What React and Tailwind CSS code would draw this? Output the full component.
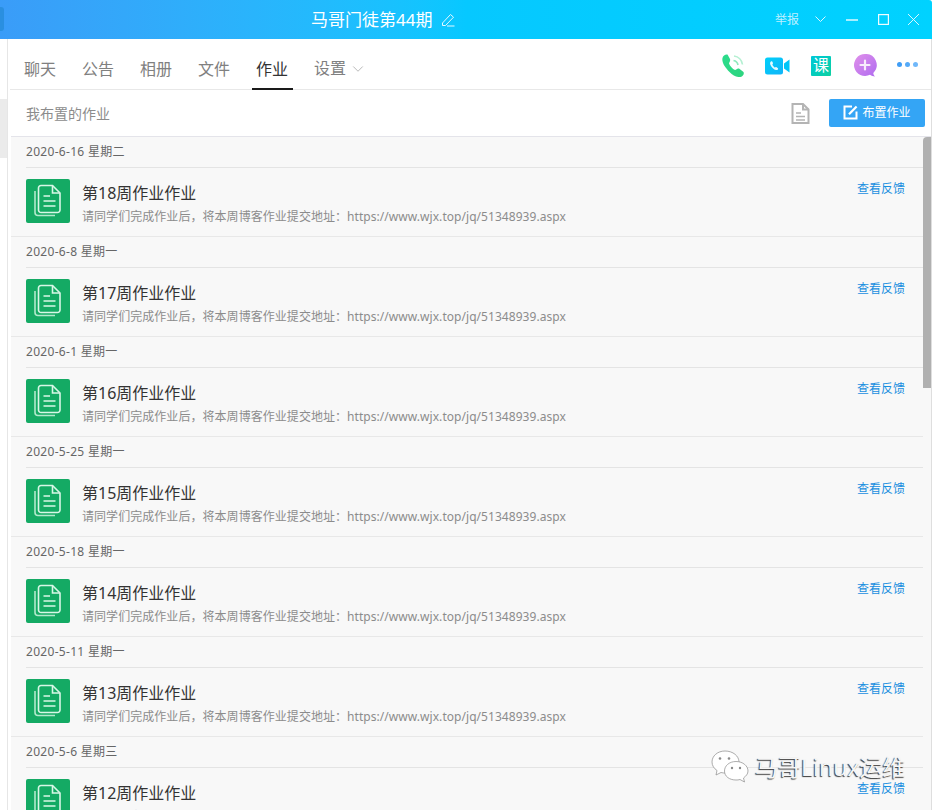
import { ChevronDown } from 'lucide-react';

const FONT = 'font-["Noto_Sans","Noto_Sans_CJK_SC",sans-serif]';

const TABS = ['聊天', '公告', '相册', '文件'];

const HOMEWORK = [
  { date: '2020-6-16 星期二', title: '第18周作业作业' },
  { date: '2020-6-8 星期一', title: '第17周作业作业' },
  { date: '2020-6-1 星期一', title: '第16周作业作业' },
  { date: '2020-5-25 星期一', title: '第15周作业作业' },
  { date: '2020-5-18 星期一', title: '第14周作业作业' },
  { date: '2020-5-11 星期一', title: '第13周作业作业' },
  { date: '2020-5-6 星期三', title: '第12周作业作业' },
];

function DocIcon() {
  return (
    <div className="w-[44px] h-[44px] rounded-[2px] bg-[#14aa64] flex items-center justify-center shrink-0">
      <svg width="30" height="34" viewBox="0 0 30 34" fill="none" stroke="#d8f7e6" strokeWidth="1.6">
        <path d="M2 7 v21.5 a3 3 0 0 0 3 3 h17" opacity="0.8" />
        <path d="M8 1.5 h11.5 l7.5 7.5 v17 a2.5 2.5 0 0 1 -2.5 2.5 h-16.5 a2.5 2.5 0 0 1 -2.5 -2.5 v-22 a2.5 2.5 0 0 1 2.5 -2.5 z" />
        <path d="M19.5 1.5 v7.5 h7.5" />
        <path d="M10.5 12 h6.5 M10.5 17 h12 M10.5 22 h12" />
      </svg>
    </div>
  );
}

function PhoneIcon() {
  return (
    <svg width="24" height="23" viewBox="0 0 24 23">
      <defs>
        <linearGradient id="ph" x1="0" y1="0" x2="1" y2="1">
          <stop offset="0" stopColor="#2bdc8c" />
          <stop offset="1" stopColor="#2ed47f" />
        </linearGradient>
      </defs>
      <path
        d="M1.5 4 C2 1.5 4.5 0 6.5 0.5 L9 5 C9.5 7 8.5 8 8 9.5 C9 12 11.5 15 14 16 C15.5 15.5 16 14 18 14.5 L22.5 18 C23.5 20 22 22.5 19.5 23 C16 23.5 12 21.5 8.5 18 C4 13.5 0.5 8.5 1.5 4 Z"
        fill="url(#ph)"
      />
      <path d="M12.5 6.5 a5.5 5.5 0 0 1 4.5 4.5" stroke="#8fe9bd" strokeWidth="1.7" fill="none" />
      <path d="M13 2 a10 10 0 0 1 8.5 8.5" stroke="#b4f0d2" strokeWidth="1.7" fill="none" />
    </svg>
  );
}

function VideoIcon() {
  return (
    <svg width="25" height="18" viewBox="0 0 25 18">
      <defs>
        <linearGradient id="vd" x1="0" y1="0" x2="1" y2="1">
          <stop offset="0" stopColor="#00d0fa" />
          <stop offset="1" stopColor="#12b4f8" />
        </linearGradient>
      </defs>
      <rect x="0" y="0.5" width="18" height="17" rx="2.5" fill="url(#vd)" />
      <path d="M19 6.5 L24.5 2.5 V15.5 L19 11.5 Z" fill="#00c6f8" />
      <path
        d="M6 4.5 C5 5 4.8 6.5 5.5 8 C6.5 10.5 9 12.7 11 13 C12.5 13.2 13.5 12.2 13 11.2 L11.2 10 C10.6 9.8 10.2 10.6 9.6 10.4 C8.6 9.8 7.6 8.6 7.4 7.6 C7.4 7 8.2 6.8 8 6 L7.2 4.6 C6.8 4.2 6.4 4.3 6 4.5 Z"
        fill="#e6faff"
      />
    </svg>
  );
}

function BubbleIcon() {
  return (
    <svg width="23" height="23" viewBox="0 0 23 23">
      <defs>
        <linearGradient id="bb" x1="0" y1="0" x2="1" y2="1">
          <stop offset="0" stopColor="#e090ea" />
          <stop offset="1" stopColor="#b06cf0" />
        </linearGradient>
      </defs>
      <path d="M11 0 a11 11 0 1 0 5 20.8 c1.5 1.2 3.2 1.7 5 1.7 c-1 -1 -1.6 -2.2 -1.7 -3.6 A11 11 0 0 0 11 0 Z" fill="url(#bb)" />
      <path d="M11 6.5 v9 M6.5 11 h9" stroke="#f8ecfc" strokeWidth="2.2" strokeLinecap="round" />
    </svg>
  );
}

function NoteIcon() {
  return (
    <svg width="19" height="21" viewBox="0 0 19 21" fill="none" stroke="#b4b4b4" strokeWidth="2">
      <path d="M1.5 1 h10.5 l5.5 5.5 v13.5 h-16 z" />
      <path d="M12 1 v5.5 h5.5" />
      <path d="M5 10 h5 M5 13.5 h9 M5 17 h9" strokeWidth="1.6" />
    </svg>
  );
}

function EditBoxIcon() {
  return (
    <svg width="15" height="15" viewBox="0 0 15 15" fill="none" stroke="#ffffff" strokeWidth="2">
      <path d="M9 1.5 H1.5 V13.5 H13.5 V6.5" />
      <path d="M6 9.2 L13.6 1.4" strokeWidth="2.2" />
    </svg>
  );
}

function WeChatMark() {
  return (
    <svg width="38" height="34" viewBox="0 0 38 34" fill="#ffffff" stroke="#8a8a8a" strokeWidth="0.7">
      <path d="M14 1 C6.5 1 1 6 1 12 C1 15.5 3 18.5 6 20.5 L5 25 L10 22.5 C11.5 23 13 23 15 23 C23 23 28 18 28 12 C28 6 22 1 14 1 Z" />
      <path d="M25 11.5 C18 11.5 13.5 16 13.5 21 C13.5 26.5 18.5 30 25 30 C26.5 30 27.5 30 29 29.5 L33.5 32 L32.5 28 C35 26 37 24 37 21 C37 16 32 11.5 25 11.5 Z" />
      <circle cx="9" cy="8.5" r="1.3" fill="#8a8a8a" stroke="none" />
      <circle cx="18" cy="8.5" r="1.3" fill="#8a8a8a" stroke="none" />
      <circle cx="21" cy="18" r="1.2" fill="#8a8a8a" stroke="none" />
      <circle cx="29" cy="18" r="1.2" fill="#8a8a8a" stroke="none" />
    </svg>
  );
}

function WindowControls() {
  return (
    <div className="ml-auto mr-[13px] flex items-center text-[#d8f7ff]">
      <span className="text-[12px] mr-[16px] text-[#bdf0ff]">举报</span>
      <svg width="11" height="7" viewBox="0 0 11 7" fill="none" stroke="currentColor" className="mr-[20px]">
        <path d="M0.5 0.5 L5.5 5.5 L10.5 0.5" />
      </svg>
      <svg width="12" height="2" viewBox="0 0 12 2" fill="none" stroke="#eefcff" strokeWidth="1.4" className="mr-[20px]">
        <path d="M0 1 H12" />
      </svg>
      <svg width="11" height="11" viewBox="0 0 11 11" fill="none" stroke="#eefcff" strokeWidth="1.2" className="mr-[19px]">
        <rect x="0.6" y="0.6" width="9.8" height="9.8" />
      </svg>
      <svg width="11" height="11" viewBox="0 0 11 11" fill="none" stroke="#eefcff" strokeWidth="0.9">
        <path d="M0 0 L11 11 M11 0 L0 11" />
      </svg>
    </div>
  );
}

function TitleBar() {
  return (
    <div className="relative h-[39px] shrink-0 flex items-center rounded-tr-[3px] bg-gradient-to-r from-[#3a9cf8] via-[#06c8ff] via-50% to-[#00d2ff]">
      <div className="absolute left-0 top-[7px] w-[4px] h-[24px] rounded-r-[3px] bg-[#2a8fe0]" />
      <div className="ml-[311px] flex items-center gap-[9px] text-white text-[17px]">
        <span>马哥门徒第44期</span>
        <svg width="14" height="14" viewBox="0 0 14 14" fill="none" stroke="#e4f8ff" strokeWidth="1">
          <path d="M1.5 10 L9.5 1.5 L12.5 4.2 L4.5 12.5 H1.5 Z" />
          <path d="M6 13 H13.5" />
        </svg>
      </div>
      <WindowControls />
    </div>
  );
}

function TabBar() {
  return (
    <div className="h-[51px] shrink-0 ml-[2px] flex border-b border-[#e8e8e8] bg-white">
      <div className="flex items-end h-[50px] pl-[14px] text-[16px] text-[#808080]">
        {TABS.map((name) => (
          <div key={name} className="w-[58px] h-[38px] leading-[36px]">
            {name}
          </div>
        ))}
        <div className="w-[41px] h-[39px] mb-[-1px] pr-[1px] leading-[36px] text-center text-[#333333] border-b-2 border-[#1a1a1a] -ml-[4px]">
          作业
        </div>
        <div className="h-[38px] leading-[34px] ml-[21px] flex">
          设置
          <ChevronDown size={18} strokeWidth={1} className="ml-[3px] mt-[9px] text-[#a0a0a0]" />
        </div>
      </div>
      <div className="ml-auto flex items-center pr-[13px] pt-[3px]">
        <PhoneIcon />
        <div className="ml-[20px]"><VideoIcon /></div>
        <div className="ml-[21px] w-[20px] h-[20px] rounded-[1px] bg-gradient-to-br from-[#00c8d8] to-[#10d0a0] text-white text-[16px] leading-[19px] text-center">课</div>
        <div className="ml-[23px]"><BubbleIcon /></div>
        <div className="ml-[20px] mt-[-3px] flex gap-[3px]">
          <span className="w-[5px] h-[5px] rounded-full bg-[#3f9df5]" />
          <span className="w-[5px] h-[5px] rounded-full bg-[#55aaf8]" />
          <span className="w-[5px] h-[5px] rounded-full bg-[#70b8fa]" />
        </div>
      </div>
    </div>
  );
}

function ToolBar() {
  return (
    <div className="h-[47px] shrink-0 ml-[3px] flex items-center border-b border-[#e4e4ea] bg-white pl-[15px] pr-[6px]">
      <span className="text-[14px] text-[#8c8c8c] mt-[1px]">我布置的作业</span>
      <div className="ml-auto mr-[19px] mt-[1px]"><NoteIcon /></div>
      <button className="w-[96px] h-[28px] rounded-[2px] bg-[#34a5f5] text-white text-[12px] flex items-center justify-center gap-[4px] mt-[-1px]">
        <EditBoxIcon />
        布置作业
      </button>
    </div>
  );
}

function HomeworkEntry({ date, title }) {
  return (
    <div>
      <div className="h-[31px] ml-[15px] border-b border-[#e4e4e4] text-[12px] leading-[29px] text-[#666666] tracking-[0.3px]">{date}</div>
      <div className="h-[69px] flex border-b border-[#e8e8e8] pl-[15px] pt-[11px]">
        <DocIcon />
        <div className="ml-[12px] flex-1 min-w-0">
          <div className="text-[16px] leading-[20px] mt-[4px] text-[#333333]">{title}</div>
          <div className="text-[12px] leading-[16px] mt-[6px] text-[#8c8c8c] tracking-[0.05px]">
            请同学们完成作业后，将本周博客作业提交地址：https://www.wjx.top/jq/51348939.aspx
          </div>
        </div>
        <a className="text-[12px] leading-[16px] mt-[2px] text-[#1a8fe0] mr-[18px]">查看反馈</a>
      </div>
    </div>
  );
}

export default function App() {
  return (
    <div className={`${FONT} relative w-[934px] h-[810px] overflow-hidden bg-white`}>
      <div className="w-[932px] h-full flex flex-col">
        <TitleBar />
        <div className="flex-1 min-h-0 flex">
          {/* narrow sliver of the chat list behind the panel */}
          <div className="w-[8px] shrink-0 border-r border-[#e6e6e6] bg-white pt-[60px]">
            <div className="h-[59px] bg-[#ebebeb]" />
          </div>
          <div className="flex-1 min-w-0 flex flex-col border-r border-[#dedede]">
            <TabBar />
            <ToolBar />
            <div className="flex-1 min-h-0 flex ml-[3px] bg-[#f8f8f8]">
              <div className="flex-1 min-w-0 overflow-hidden">
                {HOMEWORK.map((item) => (
                  <HomeworkEntry key={item.title} date={item.date} title={item.title} />
                ))}
              </div>
              <div className="w-[8px] shrink-0">
                <div className="h-[251px] bg-[#b0b0b0] rounded-tl-[4px]" />
              </div>
            </div>
          </div>
        </div>
      </div>
      {/* watermark over the page */}
      <div className="absolute left-[711px] top-[750px] flex items-center gap-[6px]">
        <WeChatMark />
        <span className="text-[23px] text-[#f6f6f6] [text-shadow:-1px_1px_1px_#3a3a3a]">马哥Linux运维</span>
      </div>
    </div>
  );
}
